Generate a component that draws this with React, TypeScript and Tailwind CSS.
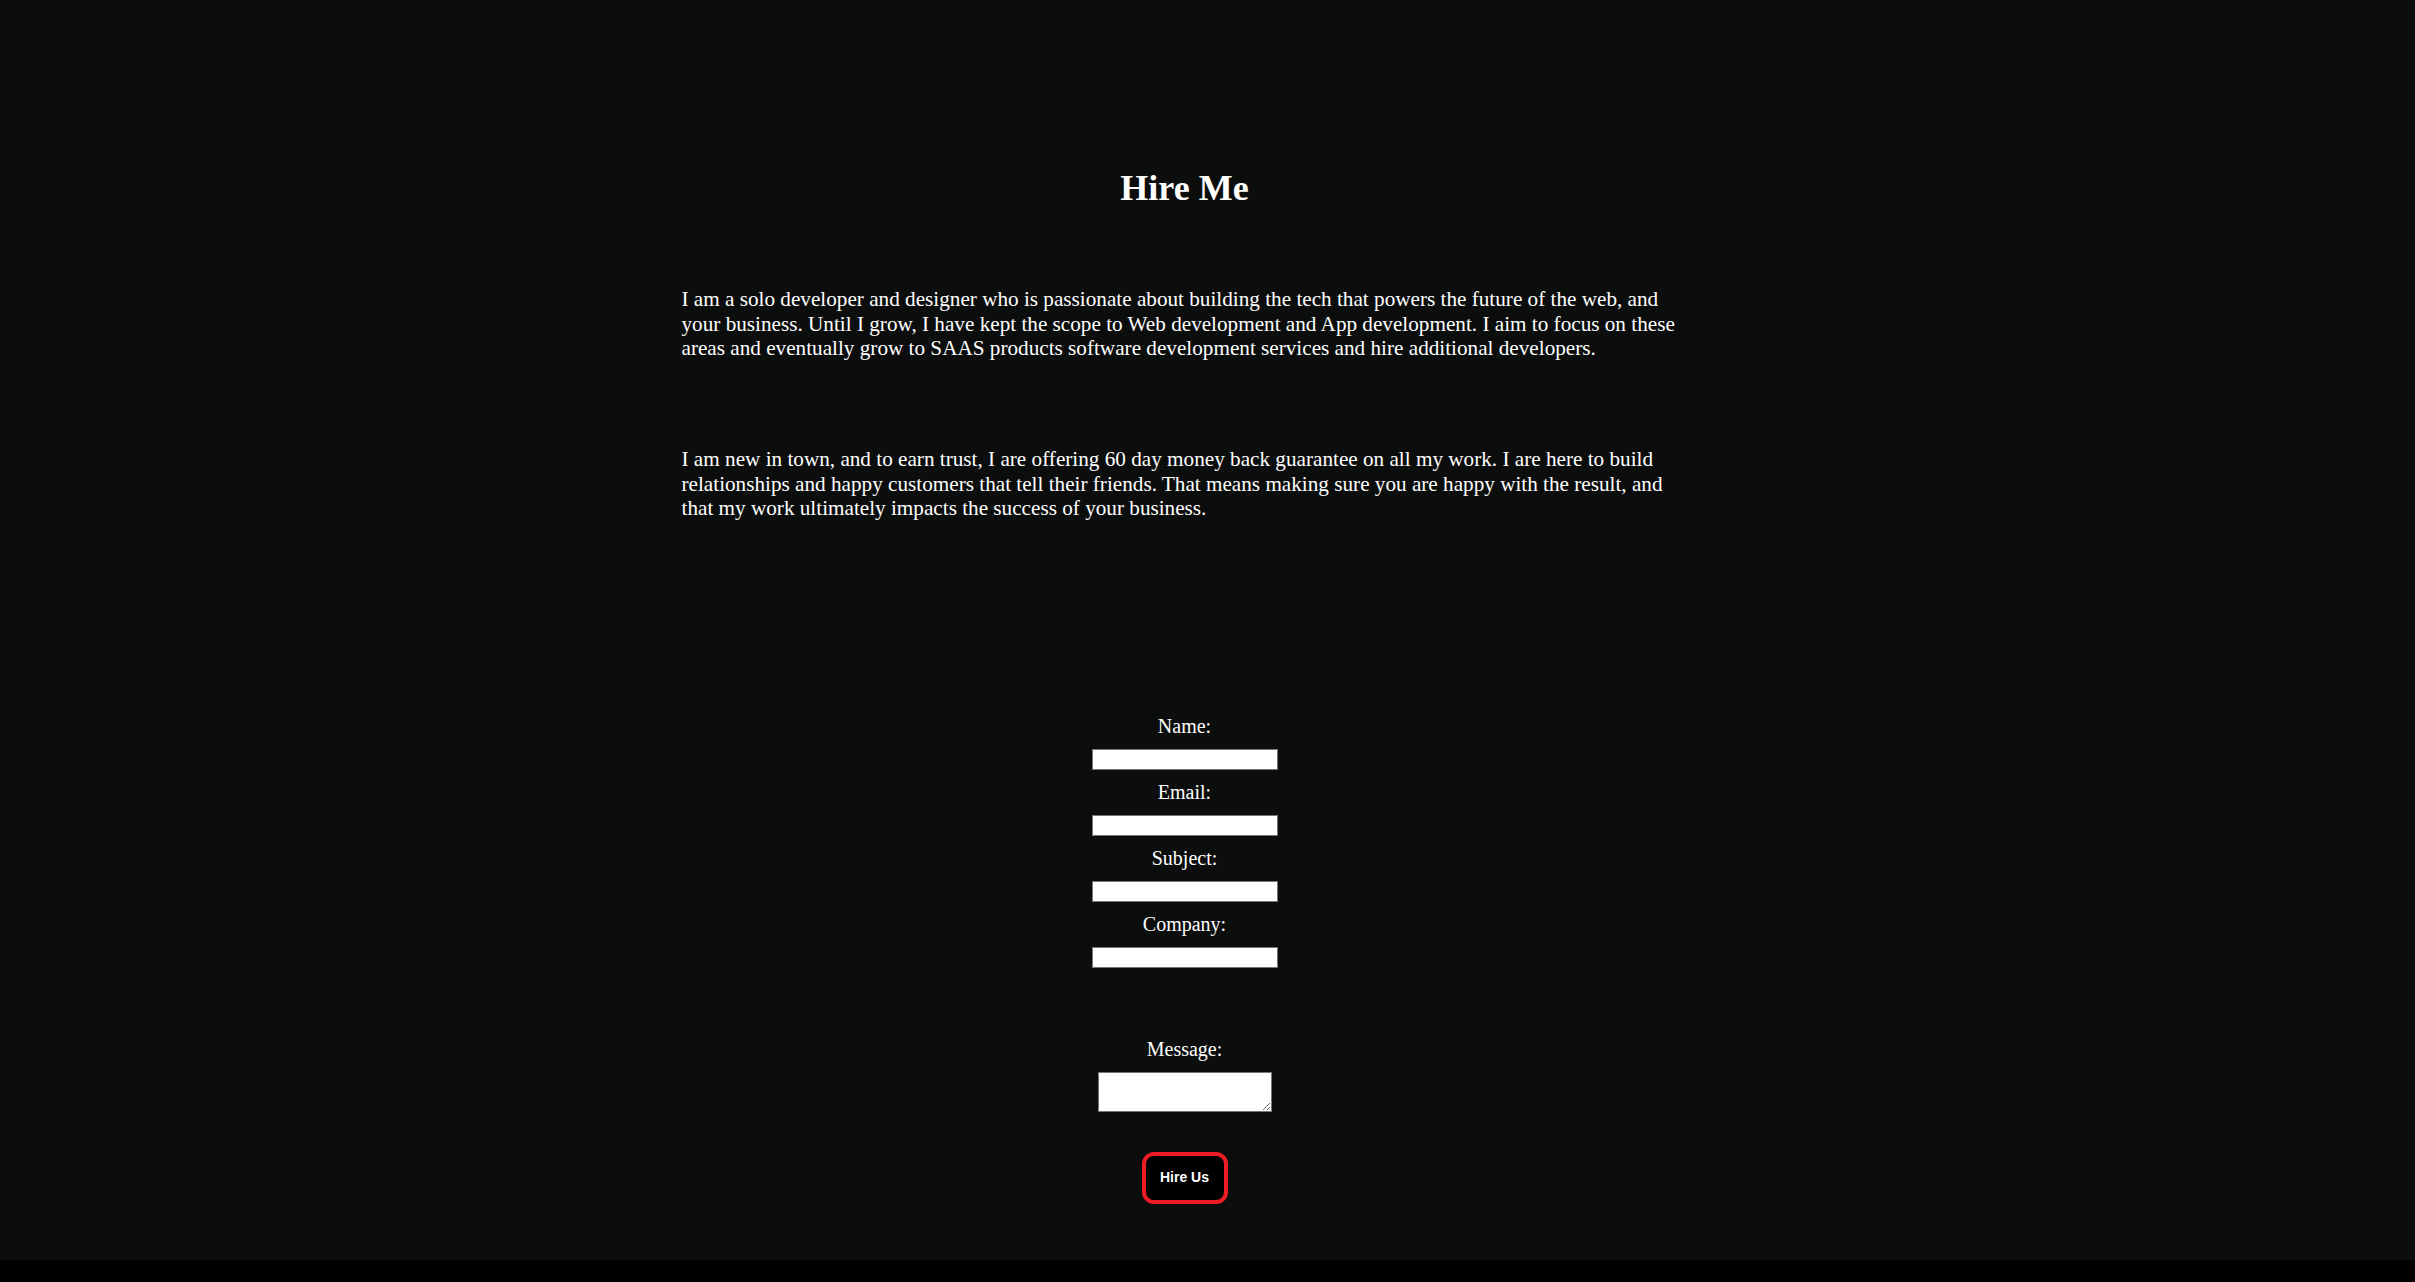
import React from "react";

export default function App() {
  const serif = { fontFamily: '"Liberation Serif", "Times New Roman", serif' } as React.CSSProperties;
  const fields = ["Name:", "Email:", "Subject:", "Company:"];
  return (
    <div className="min-h-[1282px] w-full bg-black">
      <div
        className="h-[1260px] w-full bg-[#0c0e0d] pr-[46px] text-white flex flex-col items-center"
        style={serif}
      >
        <h1 className="mt-[168px] text-[36px] leading-[41px] font-bold">Hire Me</h1>
        <div className="mt-[78px] w-[1006px] text-[21.2px] leading-[24.5px]">
          <p>
            I am a solo developer and designer who is passionate about building the tech that powers the future of the
            web, and your business. Until I grow, I have kept the scope to Web development and App development. I aim to
            focus on these areas and eventually grow to SAAS products software development services and hire additional
            developers.
          </p>
          <p className="mt-[86.5px]">
            I am new in town, and to earn trust, I are offering 60 day money back guarantee on all my work. I are here to
            build relationships and happy customers that tell their friends. That means making sure you are happy with the
            result, and that my work ultimately impacts the success of your business.
          </p>
        </div>
        <form className="mt-[194px] flex flex-col items-center" onSubmit={(e) => e.preventDefault()}>
          {fields.map((f, i) => (
            <div key={f} className={`flex flex-col items-center ${i > 0 ? "mt-[11px]" : ""}`}>
              <label className="text-[20px] leading-[23px]">{f}</label>
              <input
                type="text"
                className="mt-[11px] h-[21px] w-[186px] border border-[#767676] bg-white text-black outline-none"
              />
            </div>
          ))}
          <label className="mt-[70px] text-[20px] leading-[23px]">Message:</label>
          <textarea className="mt-[11px] h-[40px] w-[174px] border border-[#767676] bg-white text-black outline-none" />
          <button
            type="submit"
            className="mt-[40px] h-[52px] w-[86px] rounded-[12px] border-4 border-[#ee1c25] bg-black text-[14px] font-bold text-white"
            style={{ fontFamily: '"Liberation Sans", Arial, sans-serif' }}
          >
            Hire Us
          </button>
        </form>
      </div>
    </div>
  );
}
